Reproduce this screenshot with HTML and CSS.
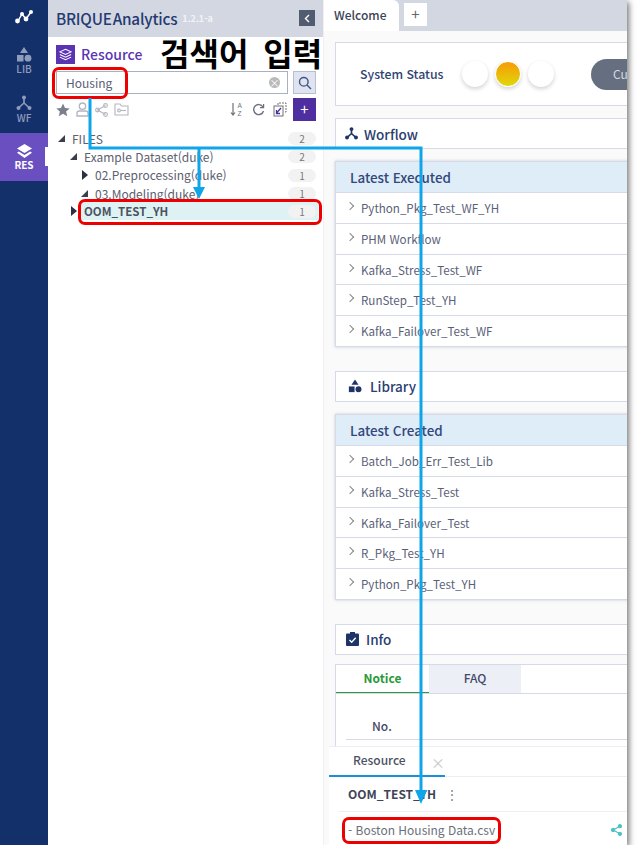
FILE: index.html
```html
<!DOCTYPE html>
<html lang="ko">
<head>
  <meta charset="UTF-8">
  <title>BRIQUE Analytics</title>
  <link rel="stylesheet" href="styles.css">
</head>
<body>
  <div class="app">
    <nav class="rail">
      <div class="rail-logo">
        <svg width="20" height="16" viewBox="0 0 20 16"><path d="M4 12 L8 5 L12 10 L17 3" fill="none" stroke="#fff" stroke-width="1.5"/><circle cx="3.5" cy="12" r="2.4" fill="#fff"/><circle cx="8" cy="5" r="2" fill="#fff"/><circle cx="12" cy="10" r="2.4" fill="#fff"/><circle cx="17" cy="3" r="2" fill="#fff"/></svg>
      </div>
      <div class="rail-item">
        <svg width="16" height="15" viewBox="0 0 16 15" fill="#8f9dbb"><path d="M8 0 L12 6 H4 Z"/><rect x="1" y="8" width="6.5" height="6.5"/><circle cx="12" cy="11.2" r="3.4"/></svg>
        <span>LIB</span>
      </div>
      <div class="rail-item">
        <svg width="16" height="16" viewBox="0 0 16 16" fill="none" stroke="#8f9dbb" stroke-width="1.6"><path d="M8 3 V8 L2.5 13 M8 8 L13.5 13"/><circle cx="8" cy="2.6" r="2" fill="#8f9dbb" stroke="none"/><circle cx="2.5" cy="13" r="2" fill="#8f9dbb" stroke="none"/><circle cx="13.5" cy="13" r="2" fill="#8f9dbb" stroke="none"/></svg>
        <span>WF</span>
      </div>
      <div class="rail-item active">
        <svg width="15" height="14" viewBox="0 0 15 14" fill="#fff"><path d="M7.5 0 L15 4.5 L7.5 9 L0 4.5 Z"/><path d="M1.8 7.6 L7.5 11 L13.2 7.6 L15 8.8 L7.5 14 L0 8.8 Z"/></svg>
        <span>RES</span>
      </div>
    </nav>

    <aside class="side">
      <header class="side-head">
        <span class="brand">BRIQUE<b>Analytics</b></span>
        <span class="version">1.2.1-a</span>
        <span class="collapse">
          <svg width="6" height="9" viewBox="0 0 6 9" fill="none" stroke="#fff" stroke-width="1.4"><path d="M5 1 L1.5 4.5 L5 8"/></svg>
        </span>
      </header>

      <div class="side-title">
        <span class="title-icon">
          <svg width="13" height="13" viewBox="0 0 15 14" fill="none" stroke="#fff" stroke-width="1.2"><path d="M7.5 1 L14 4 L7.5 7 L1 4 Z"/><path d="M1 7 L7.5 10 L14 7"/><path d="M1 10 L7.5 13 L14 10"/></svg>
        </span>
        <span>Resource</span>
      </div>

      <div class="search-row">
        <div class="search-box">
          <span>Housing</span>
          <span class="search-clear">×</span>
        </div>
        <span class="search-btn">
          <svg width="14" height="14" viewBox="0 0 14 14" fill="none" stroke="#3f5684" stroke-width="1.4"><circle cx="5.8" cy="5.8" r="4.3"/><path d="M9 9 L13 13"/></svg>
        </span>
      </div>

      <div class="tools">
        <svg width="14" height="14" viewBox="0 0 14 14" fill="#7b7f8c"><path d="M7 .5 L9 5 L13.7 5.4 L10.1 8.5 L11.2 13.3 L7 10.7 L2.8 13.3 L3.9 8.5 L.3 5.4 L5 5 Z"/></svg>
        <svg width="13" height="15" viewBox="0 0 13 15" fill="none" stroke="#b3b6bf" stroke-width="1.3"><circle cx="6.5" cy="4.2" r="3.2"/><path d="M1 14 V11 Q1 9 3.5 9 H9.5 Q12 9 12 11 V14 Z"/></svg>
        <svg width="13" height="14" viewBox="0 0 13 14" fill="none" stroke="#b3b6bf" stroke-width="1.1"><path d="M10.5 2.5 L2.5 7 L10.5 11.5"/><circle cx="10.5" cy="2.5" r="1.9"/><circle cx="2.5" cy="7" r="1.9"/><circle cx="10.5" cy="11.5" r="1.9"/></svg>
        <svg class="tool-folder" width="15" height="13" viewBox="0 0 15 13" fill="none" stroke="#b3b6bf" stroke-width="1.1"><path d="M1 12 V1 H6 L7.5 3 H14 V12 Z"/><circle cx="5" cy="7.5" r="1.4"/><path d="M6.5 7.5 H12"/></svg>
        <span class="tools-gap"></span>
        <svg class="tool-sort" width="14" height="15" viewBox="0 0 14 15" fill="none" stroke="#6d717d" stroke-width="1.2"><path d="M3 1 V13 M1 10.5 L3 13 L5 10.5"/><text x="7.5" y="6" font-size="6.5" font-family="Liberation Sans, sans-serif" fill="#6d717d" stroke="none">A</text><text x="7.5" y="14" font-size="6.5" font-family="Liberation Sans, sans-serif" fill="#6d717d" stroke="none">Z</text></svg>
        <svg class="tool-refresh" width="13" height="13" viewBox="0 0 13 13" fill="none" stroke="#6d717d" stroke-width="1.4"><path d="M11 4 A5 5 0 1 0 11.5 8"/><path d="M11.6 1 V4.6 H8" stroke-width="1.2"/></svg>
        <svg class="tool-copy" width="14" height="15" viewBox="0 0 14 15" fill="none" stroke="#6d717d" stroke-width="1"><path d="M5 3 V1 H13 V10 H11" stroke-dasharray="2 1"/><rect x="1" y="4" width="9" height="10"/><path d="M8 6 L3.5 11 M3.5 8 V11.5 H7" stroke="#4f2f9f" stroke-width="1.3"/></svg>
        <span class="add-btn">+</span>
      </div>

      <ul class="tree">
        <li class="lvl-0"><i class="tri open"></i><span class="tree-name">FILES</span><em>2</em></li>
        <li class="lvl-1"><i class="tri open"></i><span class="tree-name">Example Dataset(duke)</span><em>2</em></li>
        <li class="lvl-2"><i class="tri closed"></i><span class="tree-name">02.Preprocessing(duke)</span><em>1</em></li>
        <li class="lvl-2"><i class="tri open"></i><span class="tree-name">03.Modeling(duke)</span><em>1</em></li>
        <li class="lvl-1 selected"><i class="tri closed"></i><span class="tree-name">OOM_TEST_YH</span><em>1</em></li>
      </ul>
    </aside>

    <main class="main">
      <div class="tabbar">
        <span class="tab">Welcome</span>
        <span class="tab-add">+</span>
      </div>

      <div class="content">
        <section class="card status">
          <span class="status-label">System Status</span>
          <span class="lamp"></span>
          <span class="lamp on"></span>
          <span class="lamp"></span>
          <span class="pill">Cu</span>
        </section>

        <section class="card section-head">
          <svg width="13" height="13" viewBox="0 0 16 16" fill="none" stroke="#1f3466" stroke-width="2"><path d="M8 3 V8 L2.5 13 M8 8 L13.5 13"/><circle cx="8" cy="2.6" r="2.4" fill="#1f3466" stroke="none"/><circle cx="2.5" cy="13" r="2.4" fill="#1f3466" stroke="none"/><circle cx="13.5" cy="13" r="2.4" fill="#1f3466" stroke="none"/></svg>
          <span>Worflow</span>
        </section>

        <section class="panel">
          <h3>Latest Executed</h3>
          <ul class="list">
            <li>Python_Pkg_Test_WF_YH</li>
            <li>PHM Workflow</li>
            <li>Kafka_Stress_Test_WF</li>
            <li>RunStep_Test_YH</li>
            <li>Kafka_Failover_Test_WF</li>
          </ul>
        </section>

        <section class="card section-head lib-head">
          <svg width="14" height="14" viewBox="0 0 16 15" fill="#1f3466"><path d="M8 0 L12 6 H4 Z"/><rect x="1" y="8" width="6.5" height="6.5"/><circle cx="12" cy="11.2" r="3.4"/></svg>
          <span>Library</span>
        </section>

        <section class="panel">
          <h3>Latest Created</h3>
          <ul class="list">
            <li>Batch_Job_Err_Test_Lib</li>
            <li>Kafka_Stress_Test</li>
            <li>Kafka_Failover_Test</li>
            <li>R_Pkg_Test_YH</li>
            <li>Python_Pkg_Test_YH</li>
          </ul>
        </section>

        <section class="card section-head info-head">
          <svg width="13" height="14" viewBox="0 0 13 14"><rect y="1.5" width="13" height="12.5" rx="1" fill="#1f3466"/><rect x="4" y="0" width="5" height="3" fill="#1f3466"/><path d="M3.5 8 L5.7 10.2 L9.7 5.8" fill="none" stroke="#fff" stroke-width="1.4"/></svg>
          <span>Info</span>
        </section>

        <section class="info-panel">
          <div class="info-tabs">
            <span class="info-tab current">Notice</span>
            <span class="info-tab">FAQ</span>
          </div>
          <div class="info-th">No.</div>
        </section>
      </div>

      <section class="dock">
        <div class="dock-tabs">
          <span class="dock-tab">Resource</span>
          <span class="dock-close">×</span>
        </div>
        <div class="dock-title">
          <b>OOM_TEST_YH</b>
          <span class="dock-more">⋮</span>
        </div>
        <div class="dock-row">
          <span>- Boston Housing Data.csv</span>
          <svg width="11" height="12" viewBox="0 0 13 14" fill="none" stroke="#4fc1c4" stroke-width="1.3"><path d="M10.5 2.5 L2.5 7 L10.5 11.5"/><circle cx="10.5" cy="2.5" r="1.9" fill="#4fc1c4"/><circle cx="2.5" cy="7" r="1.9" fill="#4fc1c4"/><circle cx="10.5" cy="11.5" r="1.9" fill="#4fc1c4"/></svg>
        </div>
      </section>
    </main>

    <div class="note-label">검색어 입력</div>
    <div class="note-box box-search"></div>
    <div class="note-box box-tree"></div>
    <div class="note-box box-file"></div>
    <svg class="note-lines" width="627" height="845" viewBox="0 0 627 845">
      <path d="M90 98 V148 H421 V792 M199 148 V188" fill="none" stroke="#0ea5e9" stroke-width="3"/>
      <path d="M193 187 H205 L199 199 Z M415 790 H427 L421 804 Z" fill="#0ea5e9"/>
    </svg>
  </div>
</body>
</html>
```

FILE: styles.css
```css
* {
  box-sizing: border-box;
}

body {
  margin: 0;
  background: #fff;
  font-family: "Noto Sans CJK KR", "Noto Sans", sans-serif;
  color: #4a5068;
}

ul {
  list-style: none;
  margin: 0;
  padding: 0;
}

.app {
  position: relative;
  display: flex;
  width: 627px;
  height: 845px;
  overflow: hidden;
  background: #fff;
  box-shadow: 2px 2px 6px rgba(0, 0, 0, 0.55);
}

/* left icon rail */
.rail {
  flex: 0 0 48px;
  background: #14306b;
  display: flex;
  flex-direction: column;
}

.rail-logo {
  height: 37px;
  display: flex;
  align-items: center;
  justify-content: center;
  padding-bottom: 3px;
}

.rail-item {
  height: 48px;
  display: flex;
  flex-direction: column;
  align-items: center;
  justify-content: center;
  gap: 1px;
  font-size: 10px;
  font-weight: 500;
  line-height: 12px;
  color: #8f9dbb;
}

.rail-item.active {
  position: relative;
  background: #6a4fc0;
  color: #fff;
  font-weight: 700;
}

.rail-item.active::after {
  content: "";
  position: absolute;
  right: 0;
  top: 14px;
  width: 3px;
  height: 19px;
  background: #fff;
}

/* resource panel */
.side {
  flex: 0 0 275px;
  min-width: 0;
  overflow: hidden;
  background: #fff;
}

.side-head {
  height: 37px;
  background: #d3d7e2;
  display: flex;
  align-items: center;
  padding: 0 8px 1px 8px;
}

.brand {
  font-size: 15.3px;
  font-weight: 500;
  color: #243a72;
  letter-spacing: -0.2px;
}

.brand b {
  font-weight: 500;
  margin-left: 1px;
}

.version {
  margin-left: 5px;
  font-size: 9px;
  font-weight: 700;
  color: #f2f3f7;
}

.collapse {
  margin-left: auto;
  width: 16px;
  height: 16px;
  background: #525c70;
  display: flex;
  align-items: center;
  justify-content: center;
}

.side-title {
  height: 34px;
  padding: 0 0 0 8px;
  display: flex;
  align-items: center;
  gap: 6px;
  font-size: 14px;
  font-weight: 500;
  color: #5b34b4;
}

.title-icon {
  width: 19px;
  height: 19px;
  background: #5b34b4;
  display: flex;
  align-items: center;
  justify-content: center;
}

.search-row {
  display: flex;
  gap: 5px;
  padding-left: 8px;
  margin-bottom: 4px;
}

.search-box {
  width: 232px;
  height: 23px;
  border: 1px solid #a9b0bf;
  display: flex;
  align-items: center;
  justify-content: space-between;
  padding: 0 7px 0 9px;
  font-size: 12px;
  color: #5a6078;
}

.search-clear {
  width: 11px;
  height: 11px;
  border-radius: 50%;
  background: #b9b9b9;
  color: #fff;
  font-size: 10px;
  line-height: 11px;
  text-align: center;
}

.search-btn {
  width: 23px;
  height: 23px;
  background: #dfe4f0;
  border: 1px solid #b7bfd2;
  display: flex;
  align-items: center;
  justify-content: center;
}

.tools {
  display: flex;
  align-items: center;
  gap: 6px;
  padding: 0 7px 0 8px;
  height: 23px;
  margin-bottom: 8px;
}

.tools-gap {
  flex: 1;
}

.tool-sort,
.tool-refresh {
  margin-right: 2px;
}

.add-btn {
  width: 23px;
  height: 23px;
  margin-left: 0;
  background: #4f2f9f;
  color: #fff;
  font-size: 15px;
  line-height: 22px;
  text-align: center;
}

.tree li {
  position: relative;
  height: 18.3px;
  display: flex;
  align-items: center;
  font-size: 12px;
  color: #5c6070;
}

.tree .lvl-0 {
  padding-left: 24px;
}

.tree .lvl-1 {
  padding-left: 36px;
}

.tree .lvl-2 {
  padding-left: 47px;
}

.tree em {
  position: absolute;
  right: 7px;
  top: 3px;
  width: 28px;
  height: 13px;
  border-radius: 7px;
  background: #f2f2f2;
  font-style: normal;
  font-weight: 400;
  font-size: 10px;
  line-height: 13px;
  text-align: center;
  color: #777;
}

.tree .selected {
  margin: 0 5px 0 32px;
  padding-left: 4px;
  background: #dff2f3;
  font-weight: 700;
  font-size: 11.5px;
  color: #4d5262;
}

.tree .selected em {
  right: 2px;
}

.tri {
  position: absolute;
  width: 0;
  height: 0;
}

.tri.open {
  margin-left: -14px;
  border-left: 7px solid transparent;
  border-bottom: 7px solid #3a3f4d;
}

.tri.closed {
  margin-left: -13px;
  border-top: 5px solid transparent;
  border-bottom: 5px solid transparent;
  border-left: 6px solid #2c3040;
}

/* welcome area */
.main {
  position: relative;
  flex: 1;
  min-width: 0;
  overflow: hidden;
  background: #fafafa;
  border-left: 1px solid #f0f0f2;
}

.tabbar {
  height: 31px;
  background: #d3d7e2;
  display: flex;
  align-items: flex-start;
}

.tab {
  width: 75px;
  height: 31px;
  padding-left: 10px;
  background: #fff;
  border-top-right-radius: 6px;
  font-size: 12px;
  font-weight: 500;
  line-height: 29px;
  color: #3c4256;
}

.tab-add {
  width: 23px;
  height: 23px;
  margin: 3px 0 0 5px;
  background: #fff;
  font-size: 15px;
  line-height: 22px;
  text-align: center;
  color: #666;
}

.content {
  width: 330px;
  padding: 11px 0 0 11px;
}

.card {
  background: #fff;
  border: 1px solid #d5d9e8;
}

.status {
  height: 64px;
  display: flex;
  align-items: center;
  padding-left: 24px;
  margin-bottom: 12px;
  font-size: 12.3px;
  font-weight: 500;
  color: #2f4474;
  overflow: hidden;
}

.status-label {
  flex: 0 0 102px;
  white-space: nowrap;
}

.lamp {
  flex: 0 0 26px;
  height: 26px;
  margin-right: 7px;
  border-radius: 50%;
  background: #fff;
  box-shadow: 0 2px 4px rgba(0, 0, 0, 0.18);
}

.lamp.on {
  background: linear-gradient(#f79a06, #dfd80a);
  border: 1px solid #fff;
}

.pill {
  flex: 0 0 90px;
  height: 31px;
  margin-left: 30px;
  padding-left: 22px;
  border-radius: 16px 0 0 16px;
  background: #666f80;
  color: #d5d9e2;
  font-size: 12px;
  font-weight: 400;
  line-height: 30px;
}

.section-head {
  height: 31px;
  display: flex;
  align-items: center;
  gap: 6px;
  padding-left: 9px;
  margin-bottom: 12px;
  font-size: 13.5px;
  font-weight: 500;
  color: #2a3e70;
}

.lib-head {
  gap: 8px;
  padding-left: 12px;
}

.info-head {
  gap: 7px;
  padding-left: 10px;
  margin-bottom: 9px;
}

.panel {
  background: #fff;
  border: 1px solid #d5d9e8;
  box-shadow: 0 0 3px rgba(110, 120, 150, 0.35);
  margin-bottom: 24px;
}

.panel h3 {
  margin: 0;
  height: 30px;
  padding-left: 14px;
  background: #deedf8;
  font-size: 13.4px;
  font-weight: 500;
  line-height: 30px;
  color: #33477a;
}

.list li {
  position: relative;
  height: 30.8px;
  padding-left: 25px;
  border-top: 1px solid #d5d9e8;
  font-size: 11.6px;
  line-height: 31px;
  color: #5a5f78;
}

.list li::before {
  content: "";
  position: absolute;
  left: 11px;
  top: 10px;
  width: 5px;
  height: 5px;
  border-top: 1px solid #888;
  border-right: 1px solid #888;
  transform: rotate(45deg);
}

.info-panel {
  height: 200px;
  background: #fff;
  border: 1px solid #d5d9e8;
  border-bottom: 0;
}

.info-tabs {
  display: flex;
  height: 29px;
  border-bottom: 1px solid #d5d9e8;
}

.info-tab {
  width: 92px;
  background: #eceff6;
  font-size: 12px;
  font-weight: 500;
  line-height: 25px;
  text-align: center;
  color: #44496a;
}

.info-tab.current {
  width: 93px;
  background: #fff;
  border-bottom: 1px solid #2a9a3a;
  color: #2a9a3a;
  font-weight: 700;
}

.info-th {
  height: 46px;
  margin-left: 10px;
  padding: 22px 0 0 26px;
  border-bottom: 1px solid #d5d9e8;
  font-size: 12px;
  font-weight: 500;
  line-height: 20px;
  color: #44496a;
}

/* floating resource dock */
.dock {
  position: absolute;
  left: 5px;
  right: 0;
  bottom: 0;
  height: 99px;
  background: #fff;
  border-top: 1px solid #eceef2;
}

.dock-tabs {
  height: 30px;
  display: flex;
  align-items: center;
  border-bottom: 1px solid #eceef2;
}

.dock-tab {
  width: 116px;
  height: 30px;
  border-bottom: 2px solid #1d8fd8;
  font-size: 12px;
  font-weight: 500;
  line-height: 25px;
  padding-left: 24px;
  color: #4c5266;
}

.dock-close {
  margin-left: -14px;
  font-size: 14px;
  color: #c9c9c9;
}

.dock-title {
  height: 35px;
  margin-left: 9px;
  padding: 0 0 2px 10px;
  display: flex;
  align-items: center;
  gap: 10px;
  border-bottom: 1px solid #eef0f3;
  font-size: 12px;
  color: #3f4458;
}

.dock-title b {
  font-weight: 700;
}

.dock-more {
  color: #777;
}

.dock-row {
  height: 33px;
  display: flex;
  align-items: center;
  justify-content: space-between;
  padding: 2px 5px 0 19px;
  font-size: 12px;
  color: #6b6f7b;
}

/* red and blue annotations drawn over the capture */
.note-label {
  position: absolute;
  left: 160px;
  top: 32px;
  font-size: 32px;
  font-weight: 700;
  line-height: 40px;
  word-spacing: 6px;
  color: #000;
  white-space: nowrap;
}

.note-box {
  position: absolute;
  border: 3px solid #ee0000;
  border-radius: 7px;
}

.box-search {
  left: 52px;
  top: 67px;
  width: 76px;
  height: 32px;
}

.box-tree {
  left: 78px;
  top: 199px;
  width: 244px;
  height: 26px;
}

.box-file {
  left: 342px;
  top: 817px;
  width: 159px;
  height: 27px;
}

.note-lines {
  position: absolute;
  left: 0;
  top: 0;
  pointer-events: none;
}
```
